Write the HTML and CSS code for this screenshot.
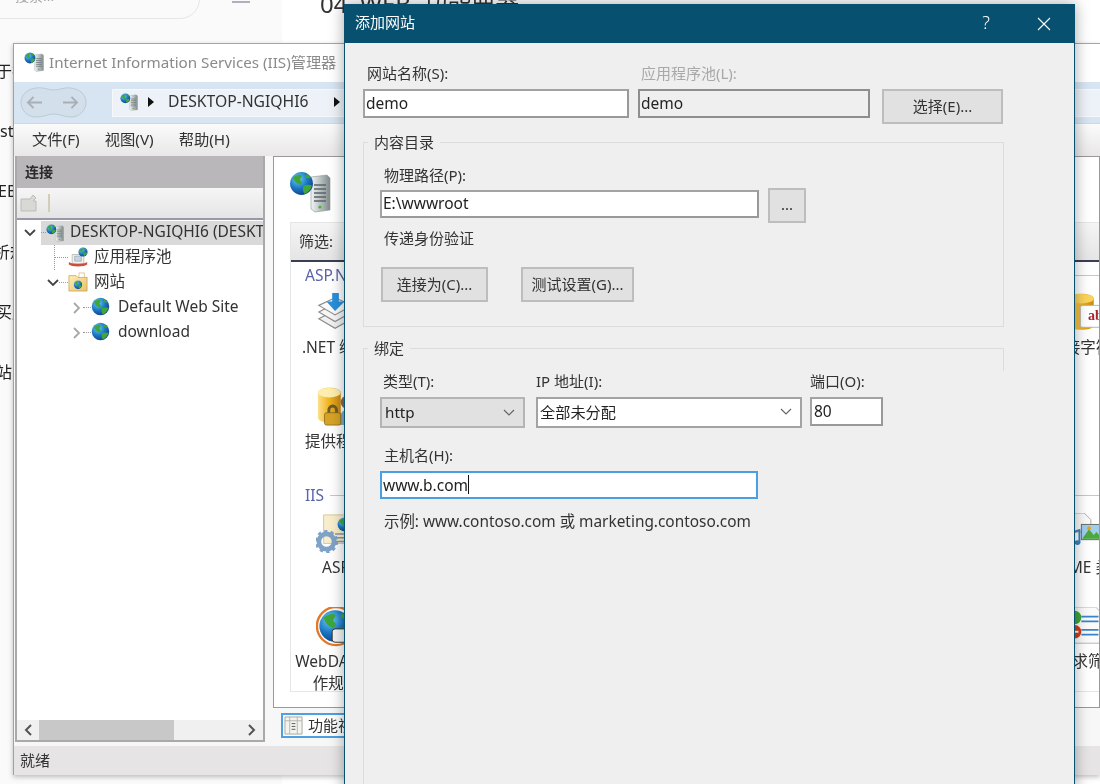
FILE: index.html
```html
<!DOCTYPE html>
<html lang="zh-CN">
<head>
<meta charset="utf-8">
<title>添加网站</title>
<link rel="stylesheet" href="styles.css">
</head>
<body>
<svg class="defs" aria-hidden="true">
  <defs>
    <radialGradient id="gGlobe" cx="35%" cy="30%" r="75%"><stop offset="0" stop-color="#6fd0f5"/><stop offset=".55" stop-color="#1b78c4"/><stop offset="1" stop-color="#123f8c"/></radialGradient>
    <linearGradient id="gServer" x1="0" x2="1"><stop offset="0" stop-color="#f2f4f4"/><stop offset=".5" stop-color="#b9c0c0"/><stop offset="1" stop-color="#7f8a8a"/></linearGradient>
    <linearGradient id="gCyl" x1="0" x2="1"><stop offset="0" stop-color="#fbe08a"/><stop offset=".5" stop-color="#f0b21e"/><stop offset="1" stop-color="#c98a10"/></linearGradient>
    <linearGradient id="gFolder" x1="0" y1="0" y2="1"><stop offset="0" stop-color="#fdeeb8"/><stop offset="1" stop-color="#e8c26a"/></linearGradient>
    <symbol id="globe" viewBox="0 0 24 24">
      <circle cx="12" cy="12" r="11" fill="url(#gGlobe)"/>
      <path d="M4 6c3-2 6-3 8-2 1 2-2 3-1 5 2 1 2 3 0 4-3 0-6-3-7-7zM14 14c3-1 6-1 8 0-1 4-4 7-7 8-2-2-2-6-1-8zM16 3c2 0 4 2 5 4-2 0-4 0-5-1z" fill="#3fa63a"/>
    </symbol>
    <symbol id="site" viewBox="0 0 42 42">
      <path d="M22 6l16-2 3 3v32l-15 2-4-3z" fill="url(#gServer)" stroke="#8b9494" stroke-width=".6"/>
      <path d="M25 14h12M25 18h12M25 22h12M25 26h12M25 30h12" stroke="#59636a" stroke-width="1.3"/>
      <circle cx="31" cy="36" r="1.6" fill="#46b53c"/>
      <use href="#globe" x="0" y="0" width="25" height="25"/>
    </symbol>
    <symbol id="pool" viewBox="0 0 24 24">
      <path d="M5 9h14v11H5z" fill="#f4f1ea" stroke="#a09a90" stroke-width=".7"/>
      <path d="M8 11h8v6H8z" fill="#c5d5e6" stroke="#7e8ea0" stroke-width=".6"/>
      <path d="M1 18c3 3 19 3 22 0v3c-3 3-19 3-22 0z" fill="#c8503c"/>
      <use href="#globe" x="12" y="0" width="12" height="12"/>
    </symbol>
    <symbol id="folder" viewBox="0 0 22 22">
      <path d="M1 4h8l2 2h10v15H1z" fill="url(#gFolder)" stroke="#c5a14e" stroke-width=".8"/>
      <path d="M12 1h6v5h-6z" fill="#fff" stroke="#c5a14e" stroke-width=".6"/>
      <use href="#globe" x="6" y="9" width="10" height="10"/>
    </symbol>
    <symbol id="stack" viewBox="0 0 42 42">
      <path d="M3 27l17-9 18 9-18 10z" fill="#f1f1f1" stroke="#8c8c8c" stroke-width="1.2"/>
      <path d="M3 20l17-9 18 9-18 10z" fill="#f6f6f6" stroke="#8c8c8c" stroke-width="1.2"/>
      <path d="M3 13L20 5l18 8-18 10z" fill="#fbfbfb" stroke="#8c8c8c" stroke-width="1.2"/>
      <path d="M17 0h7v9h6L20 19 11 9h6z" fill="#2a8fdc"/>
    </symbol>
    <symbol id="provider" viewBox="0 0 42 42">
      <path d="M2 6c0-7 24-7 24 0v26c0 7-24 7-24 0z" fill="url(#gCyl)"/>
      <ellipse cx="14" cy="6" rx="12" ry="5" fill="#fdeeae"/>
      <circle cx="33" cy="16" r="7" fill="#8a6a50"/>
      <path d="M24 40c0-12 4-16 9-16s9 4 9 16z" fill="#8aa8c8"/>
      <path d="M12 24a5.500 5.500 0 0 1 11 0v4h-3v-4a2.500 2.500 0 0 0-5 0v4h-3z" fill="#6b5a2a"/>
      <rect x="9" y="27" width="17" height="13" rx="2" fill="#d6a326" stroke="#80651e" stroke-width=".8"/>
    </symbol>
    <symbol id="cylab" viewBox="0 0 42 42">
      <path d="M1 6c0-7 26-7 26 0v28c0 6-26 6-26 0z" fill="url(#gCyl)"/>
      <ellipse cx="14" cy="6" rx="13" ry="5" fill="#fbd45c"/>
      <rect x="13" y="13" width="29" height="23" rx="2" fill="#fff" stroke="#b4b4b4"/>
    </symbol>
    <symbol id="aspgear" viewBox="0 0 42 42">
      <path d="M8 2h32v30H8z" fill="#f8edcc" stroke="#d8c898"/>
      <path d="M20 22h20M20 26h20M20 30h20" stroke="#8a97a4" stroke-width="1.6"/>
      <use href="#globe" x="22" y="4" width="16" height="16"/>
      <circle cx="11" cy="30" r="8" fill="none" stroke="#7fa2c6" stroke-width="5"/>
      <circle cx="11" cy="30" r="11" fill="none" stroke="#7fa2c6" stroke-width="2.500" stroke-dasharray="3.500 3.500"/>
    </symbol>
    <symbol id="webdav" viewBox="0 0 42 42">
      <circle cx="21" cy="20" r="20" fill="none" stroke="#e07a2a" stroke-width="2.500"/>
      <use href="#globe" x="2" y="2" width="36" height="36"/>
      <rect x="17" y="23" width="25" height="14" rx="3" fill="#f4f4f4" stroke="#333"/>
    </symbol>
    <symbol id="mime" viewBox="0 0 42 42">
      <path d="M1 0h16l7 7v13H1z" fill="#fafafa" stroke="#aaa"/>
      <path d="M3 27v-6l9-3v13" fill="none" stroke="#3a80c4" stroke-width="2"/>
      <ellipse cx="10" cy="31" rx="3" ry="2.500" fill="#3a80c4"/>
      <rect x="14" y="12" width="28" height="16" fill="#9ed0ec" stroke="#666"/>
      <path d="M15 27l7-10 5 6 3-3 6 7z" fill="#4ea83a"/>
      <circle cx="22" cy="16" r="2" fill="#e8a020"/>
    </symbol>
    <symbol id="filter" viewBox="0 0 42 42">
      <path d="M5 0h24l8 8v30H5z" fill="#fbfbfb" stroke="#b5b5b5"/>
      <path d="M14 10h18M14 15h18M14 24h18M14 29h18" stroke="#3b84c9" stroke-width="1.8"/>
      <circle cx="7" cy="11" r="7" fill="#3fa63a"/>
      <circle cx="7" cy="26" r="7" fill="#cf3f1e"/>
      <path d="M3 26h8" stroke="#fff" stroke-width="2"/>
    </symbol>
  </defs>
</svg>

<div class="stage">
  <div class="backdrop">
    <div class="bd-side">
      <div class="searchbox"><span>搜索...</span></div>
      <div class="burger"></div>
      <ul class="bd-list">
        <li class="cjk">于护</li>
        <li>sts</li>
        <li class="shift">EB</li>
        <li class="cjk2">析规</li>
        <li class="cjk">买服</li>
        <li class="cjk">站的</li>
      </ul>
    </div>
    <div class="bd-main"><h1>04 WEB 功能要器</h1></div>
  </div>

  <div class="iis">
    <div class="iis-title">
      <svg class="ic-title"><use href="#site"/></svg>
      <span>Internet Information Services (IIS)管理器</span>
    </div>
    <div class="iis-nav">
      <div class="navpill">
        <svg class="pill" viewBox="0 0 67 33"><path d="M16 2C24 1 28 4 34 4C40 4 44 1 51 2C60 3 66 9 66 16C66 24 60 31 51 31C44 31 40 28 34 28C28 28 24 31 16 31C7 31 1 24 1 16C1 9 7 3 16 2Z" fill="#d3dfeb" stroke="#bccad9"/></svg>
        <svg viewBox="0 0 20 16" class="arrow"><path d="M18 8H3M9 2L3 8l6 6" fill="none" stroke="#a9afb6" stroke-width="2"/></svg>
        <svg viewBox="0 0 20 16" class="arrow"><path d="M2 8h15M11 2l6 6-6 6" fill="none" stroke="#a9afb6" stroke-width="2"/></svg>
      </div>
      <div class="address">
        <svg class="ic-crumb"><use href="#site"/></svg>
        <svg class="crumb-tri" viewBox="0 0 6 10"><path d="M0 0l6 5-6 5z" fill="#111"/></svg>
        <span class="crumb-text">DESKTOP-NGIQHI6</span>
        <svg class="crumb-tri" viewBox="0 0 6 10"><path d="M0 0l6 5-6 5z" fill="#111"/></svg>
      </div>
    </div>
    <div class="iis-menu">
      <span>文件(F)</span><span>视图(V)</span><span>帮助(H)</span>
    </div>
    <div class="iis-main">
      <section class="conn">
        <div class="conn-title">连接</div>
        <div class="conn-tools">
          <svg viewBox="0 0 18 18" class="tool"><path d="M1 5h9l3-4 3 3-3 3h3v10H1z" fill="#d8d8d4" stroke="#bcbcb8"/></svg>
          <i class="tool-sep"></i>
        </div>
        <div class="tree">
          <div class="row root">
            <svg class="chev" viewBox="0 0 12 8"><path d="M1 1l5 5 5-5" fill="none" stroke="#444" stroke-width="1.800"/></svg>
            <div class="sel">
              <i class="dots d5"></i>
              <svg class="ic-root"><use href="#site"/></svg>
              <span>DESKTOP-NGIQHI6 (DESKTOP-NGIQHI6\Admin)</span>
            </div>
          </div>
          <div class="row lv1">
            <i class="vline v1"></i>
            <i class="dots d13"></i>
            <svg class="ic-l1"><use href="#pool"/></svg>
            <span>应用程序池</span>
          </div>
          <div class="row lv1c">
            <svg class="chev" viewBox="0 0 12 8"><path d="M1 1l5 5 5-5" fill="none" stroke="#444" stroke-width="1.800"/></svg>
            <i class="dots d9"></i>
            <svg class="ic-l1"><use href="#folder"/></svg>
            <span>网站</span>
          </div>
          <div class="row lv2">
            <svg class="chev-r" viewBox="0 0 8 12"><path d="M1 1l5 5-5 5" fill="none" stroke="#a8a8a8" stroke-width="1.800"/></svg>
            <i class="dots d8"></i>
            <svg class="ic-l2"><use href="#globe"/></svg>
            <span>Default Web Site</span>
          </div>
          <div class="row lv2">
            <svg class="chev-r" viewBox="0 0 8 12"><path d="M1 1l5 5-5 5" fill="none" stroke="#a8a8a8" stroke-width="1.800"/></svg>
            <i class="dots d8"></i>
            <svg class="ic-l2"><use href="#globe"/></svg>
            <span>download</span>
          </div>
        </div>
        <div class="hscroll">
          <svg class="sc-arrow" viewBox="0 0 8 12"><path d="M7 1L2 6l5 5" fill="none" stroke="#555" stroke-width="2"/></svg>
          <div class="sc-track"><div class="sc-thumb"></div></div>
          <svg class="sc-arrow" viewBox="0 0 8 12"><path d="M1 1l5 5-5 5" fill="none" stroke="#555" stroke-width="2"/></svg>
        </div>
      </section>
      <section class="home">
        <div class="home-box">
          <svg class="ic-home"><use href="#site"/></svg>
          <div class="features">
            <div class="filterbar"><span>筛选:</span></div>
            <div class="f-body">
              <div class="f-head"><span>ASP.NET</span><i></i></div>
              <div class="f-grid">
                <div class="tile"><svg><use href="#stack"/></svg><span>.NET 编译</span></div>
                <div class="tile col9"><svg><use href="#cylab"/></svg><b class="ab">ab</b><span>连接字符串</span></div>
                <div class="tile"><svg><use href="#provider"/></svg><span>提供程序</span></div>
              </div>
              <div class="f-head iis-head"><span>IIS</span><i></i></div>
              <div class="f-grid">
                <div class="tile"><svg><use href="#aspgear"/></svg><span>ASP</span></div>
                <div class="tile col9"><svg><use href="#mime"/></svg><span>MIME 类型</span></div>
                <div class="tile"><svg><use href="#webdav"/></svg><span>WebDAV 创作规则</span></div>
                <div class="tile col9"><svg><use href="#filter"/></svg><span>请求筛选</span></div>
              </div>
            </div>
          </div>
        </div>
        <div class="viewtabs">
          <div class="viewtab">
            <svg viewBox="0 0 20 20"><path d="M1 1h18v18H1z" fill="#f4f4ee" stroke="#a5a5a0"/><path d="M1 5h18M6 1v18M14 1v18" stroke="#b5b5b0"/><path d="M8 8h4M8 11h4M8 14h4" stroke="#555"/></svg>
            <span>功能视图</span>
          </div>
        </div>
      </section>
    </div>
    <div class="iis-status">就绪</div>
  </div>

  <div class="dialog">
    <div class="d-title">
      <span class="d-name">添加网站</span>
      <span class="d-help">?</span>
      <svg class="d-close" viewBox="0 0 14 14"><path d="M1 1l12 12M13 1L1 13" stroke="#fff" stroke-width="1.100"/></svg>
    </div>
    <div class="d-body">
      <div class="d-top">
        <div class="field f-name">
          <label>网站名称(S):</label>
          <div class="input">demo</div>
        </div>
        <div class="field f-pool">
          <label class="muted">应用程序池(L):</label>
          <div class="input readonly">demo</div>
        </div>
        <button class="btn b-select">选择(E)...</button>
      </div>

      <div class="group g-content">
        <span class="legend">内容目录</span>
        <label class="lab">物理路径(P):</label>
        <div class="path-row">
          <div class="input i-path">E:\wwwroot</div>
          <button class="btn b-dots">...</button>
        </div>
        <div class="lab pass">传递身份验证</div>
        <div class="btn-row">
          <button class="btn b-conn">连接为(C)...</button>
          <button class="btn b-test">测试设置(G)...</button>
        </div>
      </div>

      <div class="group g-bind">
        <span class="legend">绑定</span>
        <div class="bind-row">
          <div class="col c-type">
            <label class="lab-t">类型(T):</label>
            <div class="select s-type"><span>http</span><svg viewBox="0 0 12 7"><path d="M1 1l5 5 5-5" fill="none" stroke="#666" stroke-width="1.200"/></svg></div>
          </div>
          <div class="col c-ip">
            <label>IP 地址(I):</label>
            <div class="select s-ip"><span>全部未分配</span><svg viewBox="0 0 12 7"><path d="M1 1l5 5 5-5" fill="none" stroke="#666" stroke-width="1.200"/></svg></div>
          </div>
          <div class="col c-port">
            <label>端口(O):</label>
            <div class="input i-port">80</div>
          </div>
        </div>
        <label class="lab host">主机名(H):</label>
        <div class="input i-host">www.b.com<i class="caret"></i></div>
        <div class="lab example">示例: www.contoso.com 或 marketing.contoso.com</div>
      </div>
    </div>
  </div>
</div>
</body>
</html>
```

FILE: styles.css
```css
* { box-sizing: border-box; }
html, body { margin: 0; padding: 0; }
body {
  width: 1100px;
  height: 784px;
  overflow: hidden;
  font-family: "Noto Sans", "Noto Sans CJK SC", sans-serif;
  font-size: 15px;
  color: #222;
  background: #fff;
}
.defs { position: absolute; width: 0; height: 0; }
.stage {
  position: relative;
  width: 1100px;
  height: 784px;
  overflow: hidden;
  filter: blur(0.35px);
}
svg { display: block; flex: none; }
i { display: block; }

/* page behind the windows */
.backdrop { position: absolute; inset: 0; display: flex; }
.bd-side { position: relative; width: 282px; background: #fafafa; }
.bd-main { flex: 1; background: #fff; padding-left: 38px; }
.bd-main h1 { margin: -15px 0 0; font-size: 24px; font-weight: 400; color: #333; white-space: nowrap; word-spacing: 6px; }
.searchbox {
  position: absolute; left: -20px; top: -20px; width: 220px; height: 39px;
  border: 1px solid #e6e6e6; border-radius: 0 0 20px 0; padding: 8px 0 0 34px;
  font-size: 14px; color: #aaa; line-height: 14px;
}
.burger { position: absolute; left: 232px; top: 1px; width: 18px; height: 2px; background: #b0b0bc; }
.bd-list { list-style: none; margin: 0; padding: 41px 0 0 0; font-size: 16px; color: #222; white-space: nowrap; }
.bd-list li { height: 60.2px; line-height: 60px; }
.bd-list .shift { margin-left: -2px; }
.bd-list .cjk { margin-left: -4px; }
.bd-list .cjk2 { margin-left: -6px; }

/* IIS manager window */
.iis {
  position: absolute; left: 13px; top: 43px; width: 1087px; height: 732px;
  display: flex; flex-direction: column; overflow: hidden;
  background: #f7f7f7;
  border-top: 1px solid #a6a6a6; border-left: 1px solid #a0a0a0;
  box-shadow: 0 2px 5px rgba(0,0,0,.25);
}
.iis-title { height: 38px; flex: none; background: #fff; display: flex; align-items: center; padding-left: 10px; gap: 5px; color: #8a8a8a; font-size: 15.2px; }
.iis-title span { margin-bottom: 4px; }
.ic-title { width: 20px; height: 20px; margin-bottom: 2px; }
.iis-nav { height: 41px; flex: none; background: #d7e4f1; display: flex; align-items: center; padding-left: 6px; }
.navpill {
  position: relative; width: 67px; height: 33px; display: flex; align-items: center; justify-content: space-between; padding: 0 7px 0 5px;
}
.pill { position: absolute; left: 0; top: 0; width: 67px; height: 33px; }
.arrow { position: relative; width: 19px; height: 15px; }
.address {
  margin-left: 25px; flex: 1; height: 28px; background: #edf2f8; border: 1px solid #f6f8fb; border-right: 0;
  display: flex; align-items: center; padding: 0 0 2px 7px; color: #333; font-size: 15.7px;
}
.ic-crumb { width: 18px; height: 18px; }
.crumb-tri { width: 6px; height: 10px; margin-left: 10px; }
.crumb-text { margin: 0 15px 2px 14px; }
.iis-menu {
  height: 33px; flex: none; display: flex; align-items: center; padding: 0 0 5px 18px; gap: 25px;
  background: linear-gradient(#fbfbfb, #e9e7e7); font-size: 15.3px; color: #333;
  border-top: 1px solid #cfd9e4;
}
.iis-main { flex: 1; min-height: 0; display: flex; padding: 0 0 4px 1px; gap: 8px; }

.conn { width: 250px; flex: none; display: flex; flex-direction: column; border: 2px solid #a9a9a9; border-top: 0; background: #fff; }
.conn-title { height: 32px; flex: none; background: #b9b7b9; font-weight: 700; font-size: 14px; color: #2a2a2a; padding-left: 8px; line-height: 32px; }
.conn-tools { height: 32px; flex: none; background: linear-gradient(#f6f6f6, #e5e4e4); border-bottom: 2px solid #9a97a8; display: flex; align-items: center; padding-left: 3px; gap: 10px; }
.tool { width: 18px; height: 18px; }
.tool-sep { width: 2px; height: 18px; background: #d0cdb8; }

.tree { flex: 1; min-height: 0; overflow: hidden; }
.row { position: relative; height: 25px; display: flex; align-items: center; white-space: nowrap; font-size: 15.5px; color: #333; }
.row span { margin-bottom: 4px; }
.chev { width: 12px; height: 8px; }
.chev-r { width: 8px; height: 12px; margin-left: 2px; margin-right: 2px; }
.root { padding-left: 7px; }
.root .chev { margin-right: 5px; }
.sel { flex: 1; min-width: 0; height: 24px; background: #d9d9d9; display: flex; align-items: center; overflow: hidden; }
.ic-root { width: 18px; height: 20px; margin-right: 6px; }
.lv1 { padding-left: 38px; }
.lv1c { padding-left: 30px; }
.lv2 { padding-left: 54px; }
.ic-l1 { width: 20px; height: 20px; margin-right: 6px; margin-bottom: 2px; }
.ic-l2 { width: 19px; height: 19px; margin-right: 8px; margin-bottom: 2px; }
.dots { height: 0; border-top: 1px dotted #999; flex: none; }
.d5 { width: 5px; }
.d8 { width: 8px; }
.d9 { width: 9px; }
.d13 { width: 13px; }
.vline { position: absolute; left: 37px; top: 0; height: 25px; border-left: 1px dotted #999; }

.hscroll { height: 20px; flex: none; background: #f0f0f0; display: flex; align-items: center; }
.sc-arrow { width: 8px; height: 12px; margin: 0 7px; }
.sc-track { flex: 1; height: 20px; }
.sc-thumb { width: 135px; height: 20px; background: #c8c8c8; }

.home { flex: 1; min-width: 0; display: flex; flex-direction: column; }
.home-box { height: 552px; flex: none; border: 1px solid #999; background: #fff; padding-left: 16px; overflow: hidden; }
.ic-home { width: 42px; height: 42px; margin: 14px 0 0 -1px; }
.features { margin-top: 9px; height: 470px; border: 1px solid #e6e6e6; border-right: 0; display: flex; flex-direction: column; }
.filterbar { height: 39px; flex: none; background: linear-gradient(#f5f5f5, #e6e5e5); border-bottom: 2px solid #3a3f55; padding-left: 8px; font-size: 15px; line-height: 36px; color: #333; }
.f-body { flex: 1; min-height: 0; overflow: hidden; }
.f-head { height: 29px; display: flex; align-items: center; padding: 0 0 3px 14px; gap: 6px; color: #5a62aa; font-size: 15.5px; }
.f-head i { flex: 1; height: 1px; background: #bcc8e2; }
.iis-head { height: 33px; padding: 1px 0 0 14px; }
.f-grid { display: grid; grid-template-columns: repeat(9, 94px); grid-auto-rows: 93.5px; margin-left: -2px; }
.tile { position: relative; display: flex; flex-direction: column; align-items: center; padding-top: 2px; font-size: 15.5px; color: #333; text-align: center; line-height: 22px; }
.tile svg { width: 40px; height: 40px; margin-bottom: 3px; }
.tile span { max-width: 90px; }
.col9 { grid-column: 9; }
.f-grid .tile:nth-child(3) { grid-column: 1; }
.ab { position: absolute; left: 47px; top: 14px; font: 700 14px/22px "Liberation Serif", serif; color: #a8242c; white-space: nowrap; }

.viewtabs { flex: 1; padding: 5px 0 0 8px; }
.viewtab { width: 120px; height: 25px; border: 2px solid #4ea0e2; border-right: 0; background: #fff; display: flex; align-items: center; font-size: 15px; color: #333; padding-left: 1px; gap: 5px; white-space: nowrap; }
.viewtab svg { width: 19px; height: 19px; }
.viewtab span { margin-bottom: 2px; }

.iis-status { height: 29px; flex: none; background: #e6e4e4; font-size: 15px; color: #333; line-height: 29px; padding-left: 6px; }

/* dialog */
.dialog {
  position: absolute; left: 344px; top: 4px; width: 731px; height: 800px;
  background: #efefef; border: 1px solid #07506f; border-top: 0;
  box-shadow: 0 0 14px rgba(0,0,0,.35);
}
.d-title { height: 39px; background: #07506f; display: flex; align-items: center; color: #fff; padding-left: 10px; }
.d-name { font-size: 15px; margin-bottom: 4px; }
.d-help { margin: 0 0 4px auto; font-size: 18px; font-weight: 300; }
.d-close { width: 14px; height: 14px; margin: 0 23px 0 47px; }
.d-body { padding: 20px 0 0 18px; }
label, .lab { display: block; height: 20px; line-height: 20px; font-size: 15px; color: #333; white-space: nowrap; }
.muted { color: #a8a8a8; }

.input {
  background: #fff; border: 2px solid #a3a3a3; border-right-color: #999; border-bottom-color: #999;
  font-size: 15.5px; color: #222; padding: 0 0 2px 1px; display: flex; align-items: center; white-space: nowrap;
}
.readonly { background: #efefef; border-color: #8e8e8e; }
.btn {
  display: block; background: #e1e1e1; border: 2px solid #bdbdbd; padding: 0 0 3px; margin: 0;
  font: inherit; font-size: 15px; color: #333; white-space: nowrap;
}
.d-top { display: flex; height: 61px; }
.field label { margin: 0 0 6px 4px; }
.field .input { height: 29px; }
.f-name { width: 266px; }
.f-pool { width: 232px; margin-left: 9px; }
.f-pool label { margin-left: 3px; }
.b-select { width: 121px; height: 35px; margin: 26px 0 0 12px; }

.group { position: relative; width: 641px; border: 1px solid #dcdcdc; padding-left: 16px; }
.legend { position: absolute; left: 4px; top: -11px; background: #efefef; padding: 0 6px; height: 20px; line-height: 20px; font-size: 15px; color: #333; }
.g-content { height: 185px; margin-top: 18px; padding-top: 22px; }
.lab { margin-left: 4px; }
.path-row { display: flex; margin-top: 3px; gap: 9px; height: 35px; }
.i-path { width: 379px; height: 28px; margin-top: 2px; }
.b-dots { width: 38px; height: 35px; }
.pass { margin-top: 5px; }
.btn-row { display: flex; margin: 19px 0 0 1px; gap: 33px; }
.b-conn { width: 107px; height: 35px; }
.b-test { width: 113px; height: 35px; }

.g-bind { height: 460px; margin-top: 21px; padding-top: 22px; border-right: 0; border-bottom: 0; }
.g-bind::after { content: ""; position: absolute; right: 0; top: 0; width: 1px; height: 22px; background: #dcdcdc; }
.bind-row { display: flex; }
.col label { margin-bottom: 6px; }
.c-type { width: 145px; }
.c-type label { margin-left: 3px; }
.c-ip { width: 266px; margin-left: 11px; }
.c-port { width: 73px; margin-left: 8px; }
.select { height: 31px; display: flex; align-items: center; justify-content: space-between; padding: 0 8px 2px 3px; font-size: 15.2px; color: #222; border: 2px solid #a3a3a3; background: #fff; }
.select svg { width: 12px; height: 7px; margin-top: 2px; }
.s-type { background: #e1e1e1; border-color: #b4b4b4; }
.s-ip { padding: 0 8px 4px 2px; }
.i-port { height: 29px; padding-left: 2px; }
.host { margin-top: 17px; }
.i-host { width: 378px; height: 28px; margin-top: 6px; border-color: #4a9ee2; padding-bottom: 1px; }
.caret { width: 1px; height: 19px; background: #111; }
.example { margin-top: 13px; font-size: 15.4px; }
```
